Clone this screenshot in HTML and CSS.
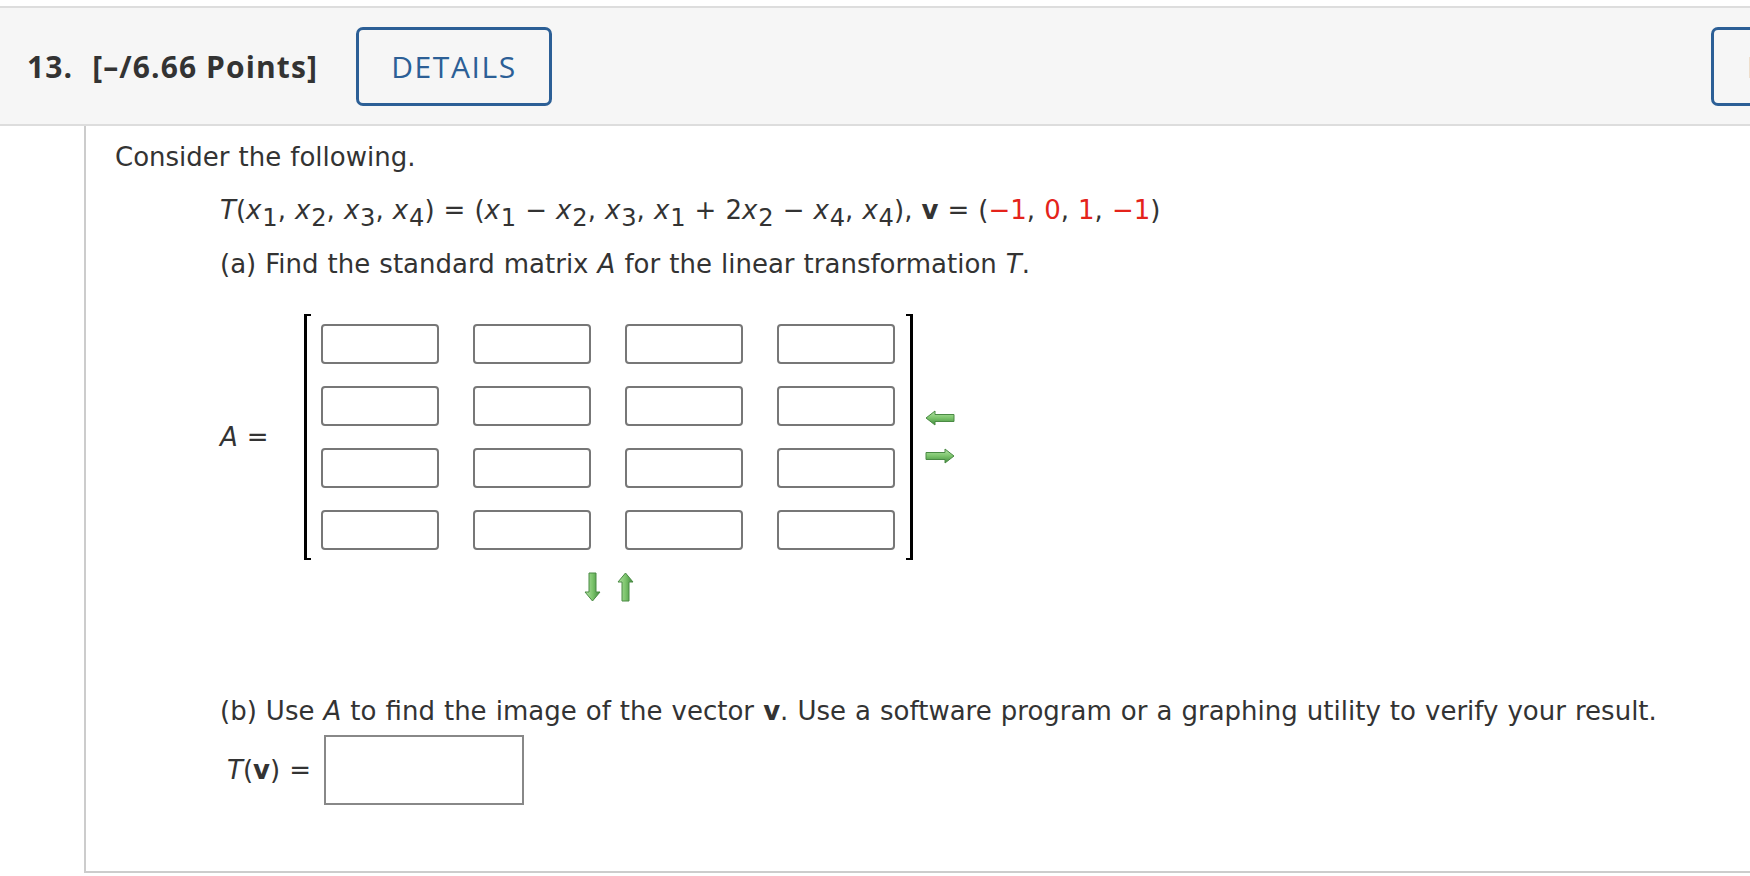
FILE: index.html
```html
<!DOCTYPE html>
<html lang="en">
<head>
<meta charset="utf-8">
<title>Question 13</title>
<link rel="stylesheet" href="styles.css">
</head>
<body>
<div class="question">
  <div class="q-header">
    <span class="q-num">13.</span>
    <span class="q-title">[–/6.66 Points]</span>
    <button class="q-btn">DETAILS</button>
    <button class="q-btn q-btn-right">MY NOTES</button>
  </div>
  <div class="q-body">
    <p class="intro">Consider the following.</p>
    <div class="indent">
      <p class="eq"><i>T</i>(<i>x</i><sub>1</sub>, <i>x</i><sub>2</sub>, <i>x</i><sub>3</sub>, <i>x</i><sub>4</sub>) = (<i>x</i><sub>1</sub> − <i>x</i><sub>2</sub>, <i>x</i><sub>3</sub>, <i>x</i><sub>1</sub> + 2<i>x</i><sub>2</sub> − <i>x</i><sub>4</sub>, <i>x</i><sub>4</sub>), <b>v</b> = (<span class="red">−1</span>, <span class="red">0</span>, <span class="red">1</span>, <span class="red">−1</span>)</p>
      <p class="part">(a) Find the standard matrix <i>A</i> for the linear transformation <i>T</i>.</p>
      <div class="matrix-row">
        <span class="mlabel"><i>A</i> =</span>
        <div class="matrix-col">
          <div class="matrix">
            <div class="bracket bracket-l"></div>
            <div class="cells">
              <div class="cell"></div><div class="cell"></div><div class="cell"></div><div class="cell"></div>
              <div class="cell"></div><div class="cell"></div><div class="cell"></div><div class="cell"></div>
              <div class="cell"></div><div class="cell"></div><div class="cell"></div><div class="cell"></div>
              <div class="cell"></div><div class="cell"></div><div class="cell"></div><div class="cell"></div>
            </div>
            <div class="bracket bracket-r"></div>
            <div class="side-arrows">
              <svg viewBox="0 0 30 16" width="30" height="16"><defs><linearGradient id="gh" x1="0" y1="0" x2="0" y2="1"><stop offset="0" stop-color="#b4e2a6"/><stop offset="0.5" stop-color="#7cc46c"/><stop offset="1" stop-color="#3f8a3c"/></linearGradient></defs><path d="M1 8 L10 1 L10 4.5 L29 4.5 L29 11.5 L10 11.5 L10 15 Z" fill="url(#gh)" stroke="#4a8a44" stroke-width="1" stroke-linejoin="round"/></svg>
              <svg viewBox="0 0 30 16" width="30" height="16"><path d="M29 8 L20 1 L20 4.5 L1 4.5 L1 11.5 L20 11.5 L20 15 Z" fill="url(#gh)" stroke="#4a8a44" stroke-width="1" stroke-linejoin="round"/></svg>
            </div>
          </div>
          <div class="bottom-arrows">
            <svg viewBox="0 0 17 30" width="17" height="30"><defs><linearGradient id="gv" x1="0" y1="0" x2="1" y2="0"><stop offset="0" stop-color="#b4e2a6"/><stop offset="0.5" stop-color="#7cc46c"/><stop offset="1" stop-color="#3f8a3c"/></linearGradient></defs><path d="M8.5 29 L1 20 L5 20 L5 1 L12 1 L12 20 L16 20 Z" fill="url(#gv)" stroke="#4a8a44" stroke-width="1" stroke-linejoin="round"/></svg>
            <svg viewBox="0 0 17 30" width="17" height="30"><path d="M8.5 1 L1 10 L5 10 L5 29 L12 29 L12 10 L16 10 Z" fill="url(#gv)" stroke="#4a8a44" stroke-width="1" stroke-linejoin="round"/></svg>
          </div>
        </div>
      </div>
      <p class="part part-b">(b) Use <i>A</i> to find the image of the vector <b>v</b>. Use a software program or a graphing utility to verify your result.</p>
      <div class="answer-row">
        <span class="alabel"><i>T</i>(<b>v</b>) =</span>
        <div class="answer-box"></div>
      </div>
    </div>
  </div>
</div>
</body>
</html>
```
FILE: styles.css
```css
html, body {
  margin: 0;
  padding: 0;
  background: #ffffff;
  overflow: hidden;
}
body {
  color: #333333;
  font-family: "DejaVu Sans", Verdana, sans-serif;
  font-size: 26px;
  word-spacing: 0.8px;
}
.question {
  padding-top: 6px;
  width: 1960px;
}
.q-header {
  display: flex;
  align-items: center;
  height: 116px;
  background: #f6f6f6;
  border-top: 2px solid #dddddd;
  border-bottom: 2px solid #dddddd;
  padding-left: 27px;
  word-spacing: 0;
}
.q-num,
.q-title {
  font-family: "Open Sans", sans-serif;
  font-weight: 700;
  font-size: 30px;
  letter-spacing: 1.1px;
  color: #333333;
  white-space: nowrap;
}
.q-num {
  margin-right: 19px;
}
.q-btn {
  margin-left: 38px;
  width: 196px;
  height: 79px;
  padding: 0;
  text-align: center;
  border: 3px solid #2c5f96;
  border-radius: 7px;
  background: transparent;
  color: #2c5f96;
  font-family: "Open Sans", sans-serif;
  font-size: 30px;
  letter-spacing: 1.6px;
  font-weight: 400;
}
.q-btn-right {
  margin-left: 1159px;
  padding-left: 33px;
  text-align: left;
  white-space: nowrap;
  overflow: hidden;
}
.q-body {
  margin-left: 84px;
  border-left: 2px solid #cccccc;
  border-bottom: 2px solid #cccccc;
  padding: 16px 0 66px 29px;
  line-height: 30px;
}
p {
  margin: 0;
}
.indent {
  margin-left: 105px;
}
.eq {
  margin-top: 23px;
}
sub {
  font-size: 0.93em;
  line-height: 0;
  vertical-align: -0.27em;
  margin-left: 0.8px;
}
.red {
  color: #e4231b;
}
.part {
  margin-top: 24px;
}
.matrix-row {
  display: flex;
  align-items: flex-start;
  margin-top: 35px;
}
.mlabel {
  width: 84px;
  margin-top: 108px;
  white-space: nowrap;
}
.matrix-col {
  display: flex;
  flex-direction: column;
}
.matrix {
  display: flex;
  align-items: center;
}
.bracket {
  width: 4px;
  height: 242px;
  border-top: 2px solid #000;
  border-bottom: 2px solid #000;
}
.bracket-l {
  border-left: 3px solid #000;
  margin-right: 10px;
}
.bracket-r {
  border-right: 3px solid #000;
  margin-left: 11px;
}
.cells {
  display: grid;
  grid-template-columns: repeat(4, 118px);
  grid-auto-rows: 40px;
  column-gap: 34px;
  row-gap: 22px;
}
.cell {
  border: 2px solid #777777;
  border-radius: 4px;
  background: #fff;
}
.side-arrows {
  display: flex;
  flex-direction: column;
  gap: 22px;
  margin-left: 12px;
}
.side-arrows svg {
  display: block;
}
.bottom-arrows {
  display: flex;
  justify-content: center;
  gap: 16px;
  margin-top: 12px;
  padding-right: 42px;
}
.bottom-arrows svg {
  display: block;
}
.part-b {
  margin-top: 94px;
}
.answer-row {
  display: flex;
  align-items: center;
  margin-top: 9px;
  padding-left: 7px;
}
.alabel {
  margin-right: 13px;
}
.answer-box {
  width: 196px;
  height: 66px;
  border: 2px solid #888888;
  background: #fff;
}
```
